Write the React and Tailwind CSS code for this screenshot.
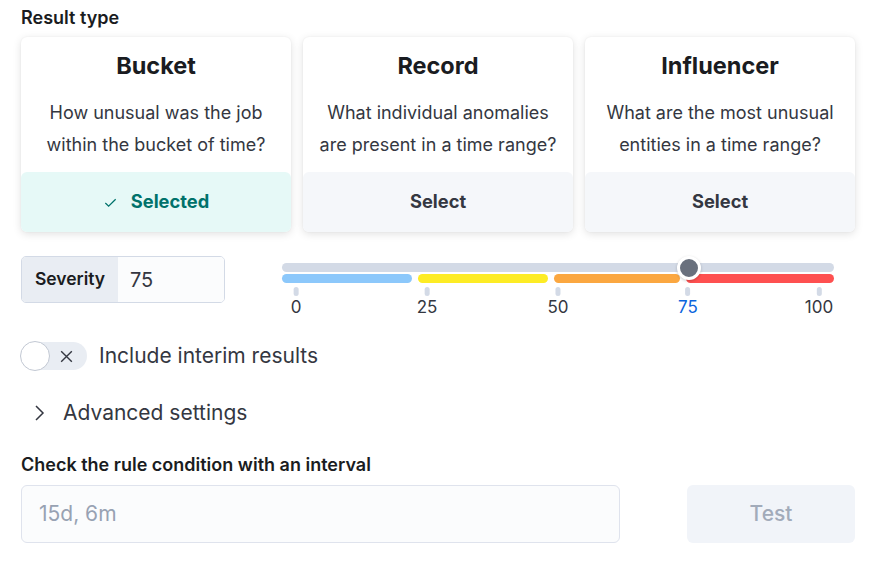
import React from 'react';

const cards = [
  { title: 'Bucket', lines: ['How unusual was the job', 'within the bucket of time?'], selected: true },
  { title: 'Record', lines: ['What individual anomalies', 'are present in a time range?'] },
  { title: 'Influencer', lines: ['What are the most unusual', 'entities in a time range?'] },
];

const bands = [
  { color: 'bg-[#8cc8fb]', w: 'w-[130px]' },
  { color: 'bg-[#fdec25]', w: 'w-[130px]' },
  { color: 'bg-[#fba740]', w: 'w-[126px]' },
  { color: 'bg-[#fe5050]', w: 'flex-1' },
];

const ticks = [
  { label: '0', x: 14 },
  { label: '25', x: 145 },
  { label: '50', x: 276 },
  { label: '75', x: 406, active: true },
  { label: '100', x: 537 },
];

function Card({ title, lines, selected }) {
  return (
    <div className="w-[270px] h-[195px] bg-white rounded-md shadow-[0_2px_8px_rgba(0,0,0,0.12),0_0_2px_rgba(0,0,0,0.06)] flex flex-col overflow-hidden">
      <div className="flex-1 flex flex-col items-center pt-[14px]">
        <div className="text-[23.5px] font-bold text-[#1a1c21] leading-[30px]">{title}</div>
        <div className="mt-[16px] text-[18px] text-[#343741] leading-[32px] text-center">
          {lines.map((l) => (
            <div key={l}>{l}</div>
          ))}
        </div>
      </div>
      {selected ? (
        <div className="h-[60px] bg-[#e6f9f7] rounded-t-md flex items-center justify-center gap-[13px] text-[#00726b] font-bold text-[18.3px]">
          <svg width="15" height="15" viewBox="0 0 16 16" fill="none" stroke="currentColor" strokeWidth="1.3">
            <path d="M2.5 8.5l3.5 3.5 7.5-7.5" />
          </svg>
          Selected
        </div>
      ) : (
        <div className="h-[60px] bg-[#f5f7fa] rounded-t-md flex items-center justify-center text-[#343741] font-bold text-[18.3px]">
          Select
        </div>
      )}
    </div>
  );
}

export default function App() {
  return (
    <div className="w-[885px] h-[569px] bg-white px-[21px] pt-[6px] font-['Inter',sans-serif] text-[#343741]">
      <div className="text-[18px] font-semibold text-[#1a1c21] leading-[24px]">Result type</div>
      <div className="flex gap-[12px] mt-[7px]">
        {cards.map((c) => (
          <Card key={c.title} {...c} />
        ))}
      </div>

      <div className="flex mt-[24px] items-start">
        <div className="w-[204px] h-[47px] border border-[#d3dae6] rounded-[5px] flex overflow-hidden">
          <div className="w-[96px] bg-[#e9edf3] flex items-center justify-center text-[17.5px] font-semibold text-[#1a1c21]">
            Severity
          </div>
          <div className="flex-1 bg-[#fbfcfd] flex items-center pl-[12px] text-[20px] text-[#343741]">75</div>
        </div>

        <div className="ml-[57px] w-[552px] relative pt-[7px]">
          <div className="h-[9px] rounded-full bg-[#d3dae6]" />
          <div className="flex gap-[6px] mt-[2px]">
            {bands.map((b, i) => (
              <div key={i} className={`h-[9px] rounded-full ${b.color} ${b.w}`} />
            ))}
          </div>
          <div className="absolute left-[395px] top-0 w-[24px] h-[24px] rounded-full bg-[#69707d] border-[3px] border-white shadow-[0_1px_3px_rgba(0,0,0,0.2)]" />
          <div className="relative h-[40px]">
            {ticks.map((t) => (
              <div key={t.label} className="absolute top-0 flex flex-col items-center -translate-x-1/2" style={{ left: t.x }}>
                <div className="w-[5px] h-[9px] mt-[4px] rounded-full bg-[#d3dae6]" />
                <div className={`text-[17px] leading-[20px] mt-[1px] ${t.active ? 'text-[#0b64dd]' : 'text-[#343741]'}`}>
                  {t.label}
                </div>
              </div>
            ))}
          </div>
        </div>
      </div>

      <div className="flex items-center mt-[19px] h-[28px]">
        <div className="w-[66px] h-[28px] rounded-full bg-[#e9edf3] relative flex items-center">
          <div className="w-[30px] h-[30px] -ml-[1px] rounded-full bg-white border border-[#c2c8d3]" />
          <svg className="ml-[8px]" width="17" height="17" viewBox="0 0 16 16" fill="none" stroke="#343741" strokeWidth="1.3">
            <path d="M3 3l10 10M13 3L3 13" />
          </svg>
        </div>
        <div className="ml-[12px] text-[21px] text-[#343741]">Include interim results</div>
      </div>

      <div className="flex items-center mt-[29px] h-[28px]">
        <svg className="ml-[11px]" width="14" height="18" viewBox="0 0 14 18" fill="none" stroke="#343741" strokeWidth="1.5">
          <path d="M4 2l7 7-7 7" />
        </svg>
        <div className="ml-[17px] text-[21px] text-[#343741]">Advanced settings</div>
      </div>

      <div className="mt-[26px] text-[18px] font-semibold text-[#1a1c21] leading-[24px]">
        Check the rule condition with an interval
      </div>
      <div className="flex mt-[8px]">
        <div className="w-[599px] h-[58px] rounded-[6px] border border-[#dfe3ed] bg-[#fbfcfd] flex items-center pl-[17px] text-[21px] text-[#98a2b3]">
          15d, 6m
        </div>
        <div className="ml-[67px] w-[168px] h-[58px] rounded-[6px] bg-[#f1f4f9] flex items-center justify-center text-[21px] font-medium text-[#a2abba]">
          Test
        </div>
      </div>
    </div>
  );
}
